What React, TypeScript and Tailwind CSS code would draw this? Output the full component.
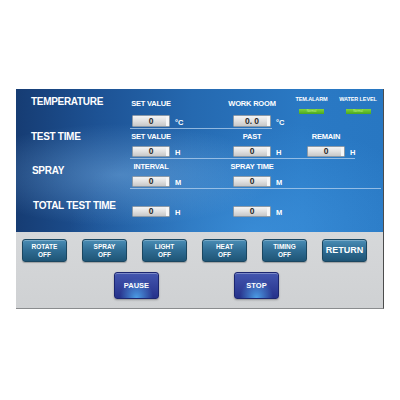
import React from 'react';

const font = "font-['Liberation_Sans',Arial,sans-serif]";

// gray readout box
const Box = ({ value, h = 'h-[11px]' }: { value: string; h?: string }) => (
  <div
    className={`${h} w-[38px] flex items-center justify-center rounded-[1px] border border-[#8c9aa8] bg-gradient-to-b from-[#f4f4f4] via-[#e0e0e0] to-[#c8c8c8] text-[8.5px] font-bold leading-none text-[#2a2a2a] shadow-[inset_-3px_0_0_#f7f7f7]`}
  >
    {value}
  </div>
);

interface FieldProps {
  label?: string;
  value: string;
  unit: string;
  width: string;
  pad: string;
  gap?: string;
  boxH?: string;
}

const Field = ({ label, value, unit, width, pad, gap = 'mt-[4px]', boxH }: FieldProps) => (
  <div className={`${width} ${pad} shrink-0`}>
    {label && (
      <div className="flex w-[38px] flex-col items-center">
        <div className="whitespace-nowrap text-[7.5px] font-bold leading-[10px] tracking-[-0.2px] text-white">{label}</div>
      </div>
    )}
    <div className={`flex items-center ${label ? gap : ''}`}>
      <Box value={value} h={boxH} />
      <span className="ml-[5px] pt-[3px] text-[7.5px] font-bold leading-none text-white">{unit}</span>
    </div>
  </div>
);

const MainLabel = ({ text, pad }: { text: string; pad: string }) => (
  <div className={`w-[116px] shrink-0 pl-[15px] ${pad} whitespace-nowrap text-[10px] font-bold leading-[12px] tracking-[-0.3px] text-white`}>
    {text}
  </div>
);

const Alarm = ({ label, width, ml }: { label: string; width: string; ml?: string }) => (
  <div className={`${width} ${ml ?? ''} flex flex-col items-center pt-[5px]`}>
    <div className="whitespace-nowrap text-[5.5px] font-bold leading-[10px] tracking-[-0.1px] text-white">{label}</div>
    <div className="mt-[5px] flex h-[5px] w-[25px] items-center justify-center bg-gradient-to-b from-[#7fd43c] to-[#4aa81e] text-[3px] leading-none text-[#b9f08a]">
      Normal
    </div>
  </div>
);

const Line = ({ w }: { w: string }) => <div className={`ml-[114px] h-px ${w} bg-[#b5d2ee]/75`} />;

const TealButton = ({ top, bottom }: { top: string; bottom?: string }) => (
  <button className="flex h-[23px] w-[45px] flex-col items-center justify-center rounded-[3px] border border-[#1b4761] bg-gradient-to-b from-[#4a8db5] via-[#2f6c93] to-[#1f5576] text-white shadow-[inset_0_1px_0_rgba(255,255,255,0.25),0_1px_1px_rgba(0,0,0,0.25)]">
    {bottom ? (
      <>
        <span className="text-[6.5px] font-bold leading-[8px]">{top}</span>
        <span className="text-[6.5px] font-bold leading-[8px]">{bottom}</span>
      </>
    ) : (
      <span className="text-[9px] font-bold leading-none">{top}</span>
    )}
  </button>
);

const BlueButton = ({ text }: { text: string }) => (
  <button className="flex h-[27px] w-[45px] items-center justify-center rounded-[3px] border border-[#1c2670] bg-[radial-gradient(ellipse_at_50%_100%,rgba(80,170,240,0.9),transparent_55%),linear-gradient(#4457b0,#25318a)] text-[7.5px] font-bold text-white shadow-[inset_0_1px_0_rgba(255,255,255,0.3),0_1px_2px_rgba(0,0,0,0.3)]">
    {text}
  </button>
);

export default function App() {
  return (
    <div className={`h-[400px] w-[400px] bg-white pl-[16px] pt-[89px] ${font}`}>
      <div className="w-[368px] border-b border-r border-b-[#8a8c8e] border-r-[#4c4c4c]">
        {/* blue status area */}
        <div className="h-[143px] bg-[radial-gradient(ellipse_at_28%_60%,rgba(130,185,235,0.45),transparent_42%),radial-gradient(ellipse_at_65%_100%,rgba(70,160,235,0.55),transparent_55%),linear-gradient(90deg,#163c73_0%,#1d5294_22%,#2569b0_48%,#2a79c4_78%,#2877c2_100%)]">
          {/* temperature */}
          <div className="flex h-[39px]">
            <MainLabel text="TEMPERATURE" pad="pt-[7px]" />
            <Field label="SET VALUE" value="0" unit="°C" width="w-[101px]" pad="pt-[10px]" gap="mt-[6px]" boxH="h-[12px]" />
            <Field label="WORK ROOM" value="0. 0" unit="°C" width="w-[58px]" pad="pt-[10px]" gap="mt-[6px]" boxH="h-[12px]" />
            <Alarm label="TEM.ALARM" width="w-[41px]" />
            <Alarm label="WATER LEVEL" width="w-[40px]" ml="ml-[6px]" />
          </div>
          <Line w="w-[142px]" />

          {/* test time */}
          <div className="flex h-[29px]">
            <MainLabel text="TEST TIME" pad="pt-[2px]" />
            <Field label="SET VALUE" value="0" unit="H" width="w-[101px]" pad="pt-[3px]" />
            <Field label="PAST" value="0" unit="H" width="w-[74px]" pad="pt-[3px]" />
            <Field label="REMAIN" value="0" unit="H" width="w-[60px]" pad="pt-[3px]" />
          </div>
          <Line w="w-[225px]" />

          {/* spray */}
          <div className="flex h-[29px]">
            <MainLabel text="SPRAY" pad="pt-[6px] pl-[16px]" />
            <Field label="INTERVAL" value="0" unit="M" width="w-[101px]" pad="pt-[3px]" />
            <Field label="SPRAY TIME" value="0" unit="M" width="w-[74px]" pad="pt-[3px]" />
          </div>
          <Line w="w-[251px]" />

          {/* total */}
          <div className="flex h-[42px]">
            <MainLabel text="TOTAL TEST TIME" pad="pt-[11px] pl-[17px]" />
            <Field value="0" unit="H" width="w-[101px]" pad="pt-[17px]" />
            <Field value="0" unit="M" width="w-[74px]" pad="pt-[17px]" />
          </div>
        </div>

        {/* control buttons */}
        <div className="h-[76px] bg-gradient-to-b from-[#d6d8da] to-[#cfd1d3] pl-[6px] pt-[7px]">
          <div className="flex gap-[15px]">
            <TealButton top="ROTATE" bottom="OFF" />
            <TealButton top="SPRAY" bottom="OFF" />
            <TealButton top="LIGHT" bottom="OFF" />
            <TealButton top="HEAT" bottom="OFF" />
            <TealButton top="TIMING" bottom="OFF" />
            <TealButton top="RETURN" />
          </div>
          <div className="mt-[10px] flex gap-[75px] pl-[92px]">
            <BlueButton text="PAUSE" />
            <BlueButton text="STOP" />
          </div>
        </div>
      </div>
    </div>
  );
}
